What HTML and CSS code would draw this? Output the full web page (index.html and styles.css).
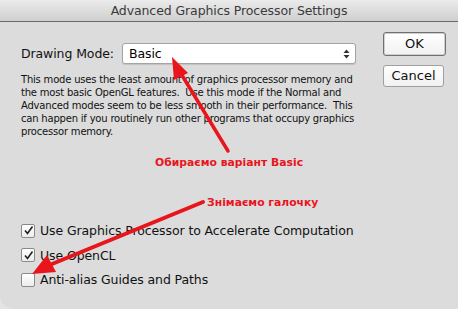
FILE: index.html
```html
<!DOCTYPE html>
<html>
<head>
<meta charset="utf-8">
<link rel="stylesheet" href="styles.css">
</head>
<body>
<div class="window">
  <div class="titlebar">Advanced Graphics Processor Settings</div>
  <div class="content">
    <div class="main">
      <div class="mode-row">
        <span class="mode-label">Drawing Mode:</span>
        <div class="select">
          <span class="select-value">Basic</span>
          <svg class="select-arrows" width="7" height="10" viewBox="0 0 7 10"><path d="M3.5 0.5 L6.5 4 L0.5 4 Z M3.5 9.5 L6.5 6 L0.5 6 Z" fill="#333"/></svg>
        </div>
      </div>
      <p class="desc">This mode uses the least amount of graphics processor memory and<br>the most basic OpenGL features.&nbsp; Use this mode if the Normal and<br>Advanced modes seem to be less smooth in their performance.&nbsp; This<br>can happen if you routinely run other programs that occupy graphics<br>processor memory.</p>
      <div class="checks">
        <label class="check-row"><span class="box checked"><svg width="11" height="11" viewBox="0 0 11 11"><path d="M2 5.5 L4.5 8.5 L9.5 1.5" fill="none" stroke="#222" stroke-width="1.6"/></svg></span>Use Graphics Processor to Accelerate Computation</label>
        <label class="check-row"><span class="box checked"><svg width="11" height="11" viewBox="0 0 11 11"><path d="M2 5.5 L4.5 8.5 L9.5 1.5" fill="none" stroke="#222" stroke-width="1.6"/></svg></span>Use OpenCL</label>
        <label class="check-row"><span class="box"></span>Anti-alias Guides and Paths</label>
      </div>
    </div>
    <div class="buttons">
      <div class="btn btn-default">OK</div>
      <div class="btn">Cancel</div>
    </div>
  </div>
  <div class="note note-1">Обираємо варіант Basic</div>
  <div class="note note-2">Знімаємо галочку</div>
  <svg class="arrows" width="458" height="309" viewBox="0 0 458 309">
    <line x1="228" y1="151" x2="180" y2="72" stroke="#e8161c" stroke-width="3.5" stroke-linecap="round"/>
    <path d="M172 57 L188 73 L174 80 Z" fill="#e8161c"/>
    <line x1="203" y1="202" x2="52" y2="264" stroke="#e8161c" stroke-width="4" stroke-linecap="round"/>
    <path d="M32 274 L47 255 L56 272 Z" fill="#e8161c"/>
  </svg>
</div>
</body>
</html>
```
FILE: styles.css
```css
html, body {
  margin: 0;
  padding: 0;
  background: #e4e4e4;
}
.window {
  position: relative;
  width: 458px;
  height: 309px;
  background: #dcdcdc;
  border-bottom-left-radius: 14px;
  border-bottom-right-radius: 4px;
  overflow: hidden;
  font-family: "DejaVu Sans", "Liberation Sans", sans-serif;
  color: #111;
}
.titlebar {
  height: 21px;
  line-height: 21px;
  border-bottom: 1px solid #6a6a6a;
  background: linear-gradient(#ebebeb, #cfcfcf);
  text-align: center;
  font-size: 12.5px;
  letter-spacing: -0.1px;
  color: #3a3a3a;
}
.content {
  display: flex;
  justify-content: space-between;
  padding: 0 12px 0 21px;
}
.main {
  display: flex;
  flex-direction: column;
}
.mode-row {
  display: flex;
  align-items: center;
  margin-top: 21px;
  gap: 4px;
  white-space: nowrap;
}
.mode-label {
  font-size: 12.5px;
  letter-spacing: -0.1px;
  width: 97px;
}
.select {
  width: 221px;
  height: 19px;
  border: 1px solid #a4a4a4;
  border-radius: 3px;
  background: #fff;
  display: flex;
  align-items: center;
  justify-content: space-between;
  padding: 0 5px 0 6px;
  box-shadow: 0 1px 1px rgba(0,0,0,0.12);
}
.select-value {
  font-size: 12.5px;
  letter-spacing: -0.1px;
  color: #000;
}
.desc {
  margin: 9px 0 0;
  font-size: 10px;
  letter-spacing: -0.2px;
  line-height: 13px;
  white-space: nowrap;
  color: #111;
}
.checks {
  display: flex;
  flex-direction: column;
  gap: 9.5px;
  margin-top: 85px;
}
.check-row {
  display: flex;
  align-items: center;
  gap: 5px;
  font-size: 12.5px;
  letter-spacing: -0.1px;
  height: 15px;
  white-space: nowrap;
  color: #111;
}
.box {
  width: 12px;
  height: 12px;
  border: 1px solid #8a8a8a;
  border-radius: 2px;
  background: linear-gradient(#ffffff, #ececec);
  display: flex;
  align-items: center;
  justify-content: center;
}
.buttons {
  display: flex;
  flex-direction: column;
  gap: 9px;
  margin-top: 10px;
}
.btn {
  width: 59px;
  height: 20px;
  line-height: 20px;
  text-align: center;
  font-size: 13px;
  border: 1px solid #a0a0a0;
  border-radius: 3px;
  background: linear-gradient(#ffffff, #f1f1f1);
  color: #111;
}
.btn-default {
  width: 61px;
  height: 22px;
  line-height: 22px;
  border: 1px solid #707070;
  box-shadow: inset 0 0 0 1px #cfcfcf;
}
.note {
  position: absolute;
  font-family: "DejaVu Sans", sans-serif;
  font-weight: bold;
  font-size: 10.8px;
  color: #e8161c;
  white-space: nowrap;
}
.note-1 { left: 155px; top: 156px; }
.note-2 { left: 207px; top: 196px; }
.arrows {
  position: absolute;
  left: 0;
  top: 0;
  pointer-events: none;
}
```
